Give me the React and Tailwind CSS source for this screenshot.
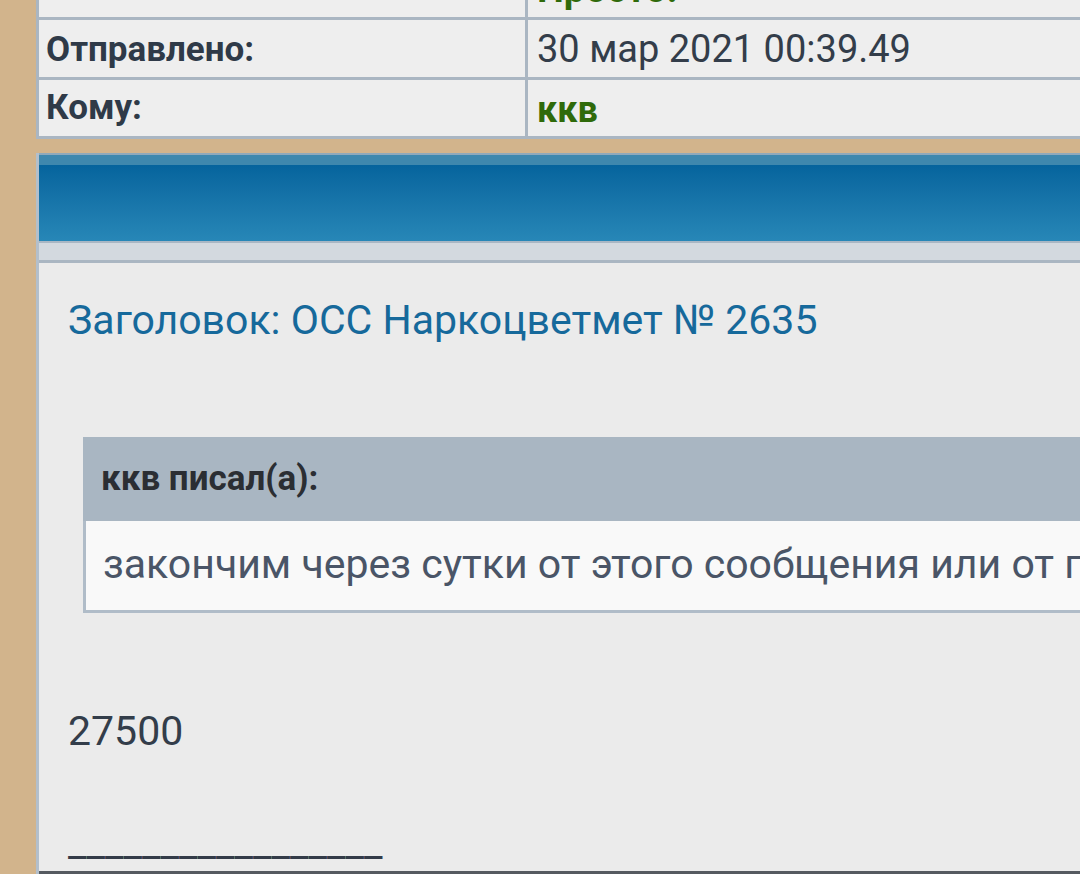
export default function App() {
  return (
    <div className="w-[1080px] h-[874px] overflow-hidden bg-[#d2b48c] pl-[36px] font-['Roboto','Noto_Sans',sans-serif] flex flex-col">
      {/* header table */}
      <div className="border-l-[3px] border-[#aab6c2] bg-[#eeeeee] flex flex-col">
        <div className="flex h-[20px] border-b-[3px] border-[#aab6c2] overflow-hidden">
          <div className="w-[486px] shrink-0"></div>
          <div className="border-l-[3px] border-[#aab6c2] flex-1 relative overflow-hidden">
            <div className="absolute left-[9px] top-[-30px] text-[38px] leading-[38px] font-bold text-[#2f6a0a] whitespace-nowrap">Просто!</div>
          </div>
        </div>
        <div className="flex h-[60px] border-b-[3px] border-[#aab6c2]">
          <div className="w-[486px] shrink-0 pl-[7px] pt-[4px] flex items-center text-[35px] font-bold text-[#2f3a48]">Отправлено:</div>
          <div className="border-l-[3px] border-[#aab6c2] flex-1 pl-[9px] pt-[2px] flex items-center text-[38px] text-[#333d4a] whitespace-nowrap">30 мар 2021 00:39.49</div>
        </div>
        <div className="flex h-[59px] border-b-[3px] border-[#aab6c2]">
          <div className="w-[486px] shrink-0 pl-[7px] flex items-center text-[35px] font-bold text-[#2f3a48]">Кому:</div>
          <div className="border-l-[3px] border-[#aab6c2] flex-1 pl-[9px] pt-[4px] flex items-center text-[36px] font-bold text-[#2f6a0a]">ккв</div>
        </div>
      </div>

      <div className="h-[14px] shrink-0"></div>

      {/* panel */}
      <div className="flex-1 flex flex-col border-l-[3px] border-[#b3bfcb] min-h-0">
        <div className="h-[2px] bg-[#8fa9bb] shrink-0"></div>
        <div className="h-[10px] bg-[#3e88ae] shrink-0"></div>
        <div className="h-[76px] bg-gradient-to-b from-[#05649d] to-[#2787b7] shrink-0"></div>
        <div className="h-[2px] bg-[#a9b7c4] shrink-0"></div>
        <div className="h-[17px] bg-[#d3d9df] shrink-0"></div>
        <div className="h-[3px] bg-[#aab6c2] shrink-0"></div>

        <div className="flex-1 bg-[#ebebeb] border-b-[3px] border-[#555a60] pl-[29px] pt-[33px] flex flex-col overflow-hidden">
          <div className="text-[41px] leading-[48px] text-[#16699b] whitespace-nowrap">Заголовок: ОСС Наркоцветмет № 2635</div>

          <div className="mt-[93px] ml-[15px] flex flex-col">
            <div className="h-[84px] bg-[#a9b6c2] pl-[18px] flex items-center text-[35px] font-bold text-[#2b2e33] whitespace-nowrap">ккв писал(а):</div>
            <div className="h-[92px] bg-[#f9f9f9] border-l-[3px] border-b-[3px] border-[#b0bcc8] pl-[17px] pb-[2px] flex items-center text-[41px] text-[#4a5567] whitespace-nowrap overflow-hidden">закончим через сутки от этого сообщения или от последнего</div>
          </div>

          <div className="mt-[94px] text-[41px] leading-[48px] text-[#333d4a]">27500</div>
          <div className="mt-[63px] text-[41px] leading-[48px] text-[#333b48] whitespace-nowrap">_________________</div>
        </div>
      </div>
    </div>
  );
}
